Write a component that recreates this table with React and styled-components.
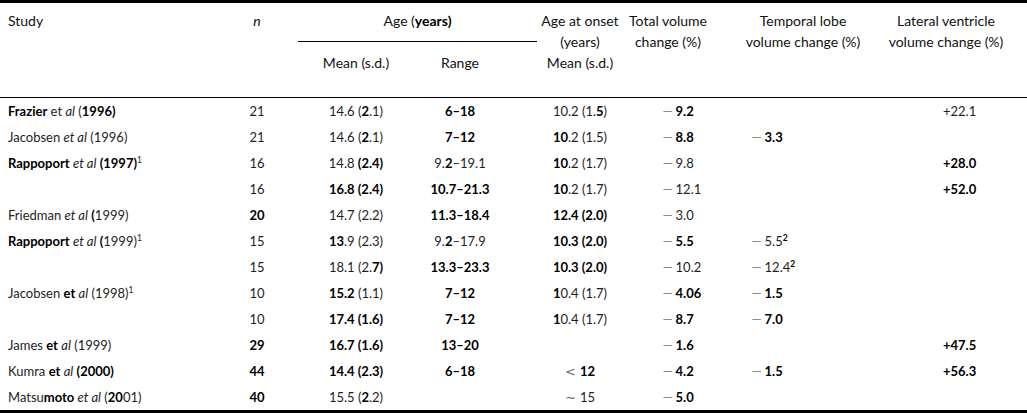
import React from 'react';
import styled, { createGlobalStyle } from 'styled-components';

const GlobalStyle = createGlobalStyle`
body {
  margin: 0;
  background: #fff;
  font-family: Lato, "Open Sans", "Liberation Sans", sans-serif;
  color: #1e1e1e;
}
`

// column layout: width, alignment and inner padding
const COLS = [
  { w: 230, align: 'left', pl: 8, pr: 0 },
  { w: 68, align: 'center', pl: 0, pr: 14 },
  { w: 116, align: 'center', pl: 0, pr: 0 },
  { w: 123, align: 'center', pl: 0, pr: 31 },
  { w: 90, align: 'center', pl: 0, pr: 4 },
  { w: 87, align: 'left', pl: 36, pr: 0 },
  { w: 156, align: 'left', pl: 38, pr: 0 },
  { w: 157, align: 'left', pl: 73, pr: 0 },
];

const template = COLS.map(c => `${c.w}px`).join(' ');

const Table = styled.div`
width: 1027px;
border-top: 3px solid #000;
border-bottom: 3px solid #000;
font-size: 13px;
`

const Head = styled.div`
display: grid;
grid-template-columns: ${template};
grid-template-rows: repeat(3, 21px);
padding: 7px 0 24px;
border-bottom: 1px solid #000;
line-height: 21px;
font-size: 14px;
color: #111;
`

const HeadCell = styled.div`
grid-column: ${p => p.$col};
grid-row: ${p => p.$row || '1'};
text-align: ${p => p.$align || 'center'};
padding-left: ${p => p.$pl || 0}px;
padding-right: ${p => p.$pr || 0}px;
white-space: nowrap;
`

const AgeRule = styled.div`
grid-column: 3 / 5;
grid-row: 2;
align-self: center;
border-top: 1px solid #000;
`

const Row = styled.div`
display: grid;
grid-template-columns: ${template};
height: 26px;
align-items: center;
`

const Cell = styled.div`
text-align: ${p => p.$align};
padding-left: ${p => p.$pl}px;
padding-right: ${p => p.$pr}px;
white-space: nowrap;
`

const B = styled.b`
font-weight: 700;
color: #000;
`

const I = styled.i`
font-style: italic;
`

const Minus = styled.span`
display: inline-block;
color: #8c8c8c;
transform: scaleX(1.5);
margin: 0 4px 0 1px;
`

const Sign = styled.span`
font-family: "DejaVu Sans", "Liberation Sans", sans-serif;
color: #6a6a6a;
font-size: 13px;
margin-right: 4px;
`

const Sup = styled.sup`
font-size: 8.5px;
line-height: 0;
vertical-align: 5px;
`

const M = () => <Minus>−</Minus>;

const rows = [
  [<><B>Frazier</B> et <I>al</I> (<B>1996)</B></>, '21', <>14.6 (<B>2</B>.1)</>, <B>6–18</B>, <>10.2 (1.<B>5</B>)</>, <><M /><B>9.2</B></>, '', '+22.1'],
  [<>Jacobsen <I>et al</I> (1996)</>, '21', <>14.6 (<B>2</B>.1)</>, <B>7–12</B>, <><B>10</B>.2 (1.5)</>, <><M /><B>8.8</B></>, <><M /><B>3.3</B></>, ''],
  [<><B>Rappoport</B> <I>et al</I> <B>(1997)</B><Sup>1</Sup></>, '16', <>14.8 <B>(2.4)</B></>, <>9.<B>2</B>–19.1</>, <><B>10</B>.2 (1.7)</>, <><M />9.8</>, '', <B>+28.0</B>],
  ['', '16', <B>16.8 (2.4)</B>, <B>10.7–21.3</B>, <><B>10</B>.2 (1.7)</>, <><M />12.1</>, '', <B>+52.0</B>],
  [<>Friedman <I>et al</I> <B>(</B>1999)</>, <B>20</B>, '14.7 (2.2)', <B>11.3–18.4</B>, <B>12.4 (2.0)</B>, <><M />3.0</>, '', ''],
  [<><B>Rappoport</B> <I>et al</I> <B>(</B>1999)<Sup>1</Sup></>, '15', <><B>13</B>.9 (2.3)</>, <>9.<B>2</B>–17.9</>, <B>10.3 (2.0)</B>, <><M /><B>5.5</B></>, <><M />5.5<Sup><B>2</B></Sup></>, ''],
  ['', '15', <>18.1 (2.<B>7)</B></>, <B>13.3–23.3</B>, <B>10.3 (2.0)</B>, <><M />10.2</>, <><M />12.4<Sup><B>2</B></Sup></>, ''],
  [<>Jacobsen <B>et</B> <I>al</I> (1998)<Sup>1</Sup></>, '10', <><B>15.2</B> (1.1)</>, <B>7–12</B>, <><B>1</B>0.4 (1.7)</>, <><M /><B>4.06</B></>, <><M /><B>1.5</B></>, ''],
  ['', '10', <B>17.4 (1.6)</B>, <B>7–12</B>, <><B>1</B>0.4 (1.7)</>, <><M /><B>8.7</B></>, <><M /><B>7.0</B></>, ''],
  [<>James <B>et</B> <I>al</I> (1999)</>, <B>29</B>, <B>16.7 (1.6)</B>, <B>13–20</B>, '', <><M /><B>1.6</B></>, '', <B>+47.5</B>],
  [<>Kumra <B>et</B> <I>al</I> <B>(2000)</B></>, <B>44</B>, <B>14.4 (2.3)</B>, <B>6–18</B>, <><Sign>&lt;</Sign><B>12</B></>, <><M /><B>4.2</B></>, <><M /><B>1.5</B></>, <B>+56.3</B>],
  [<>Matsu<B>moto</B> <I>et al</I> (<B>20</B>01)</>, <B>40</B>, <>15.5 (<B>2</B>.2)</>, '', <><Sign>∼</Sign>15</>, <><M /><B>5.0</B></>, '', ''],
];

export default function App() {
  return (
    <>
      <GlobalStyle />
      <Table>
        <Head>
          <HeadCell $col="1" $align="left" $pl={8}>Study</HeadCell>
          <HeadCell $col="2" $pr={14}><I>n</I></HeadCell>
          <HeadCell $col="3 / 5">Age (<B>years)</B></HeadCell>
          <AgeRule />
          <HeadCell $col="3" $row="3">Mean (s.d.)</HeadCell>
          <HeadCell $col="4" $row="3" $pr={31}>Range</HeadCell>
          <HeadCell $col="5" $row="1 / span 3" $pr={4}>Age at onset<br />(years)<br />Mean (s.d.)</HeadCell>
          <HeadCell $col="6" $row="1 / span 2" $pr={5}>Total volume<br />change (%)</HeadCell>
          <HeadCell $col="7" $row="1 / span 2" $pl={22}>Temporal lobe<br />volume change (%)</HeadCell>
          <HeadCell $col="8" $row="1 / span 2" $pr={5}>Lateral ventricle<br />volume change (%)</HeadCell>
        </Head>
        {rows.map((cells, i) => (
          <Row key={i}>
            {cells.map((c, j) => (
              <Cell key={j} $align={COLS[j].align} $pl={COLS[j].pl} $pr={COLS[j].pr}>{c}</Cell>
            ))}
          </Row>
        ))}
      </Table>
    </>
  )
}
